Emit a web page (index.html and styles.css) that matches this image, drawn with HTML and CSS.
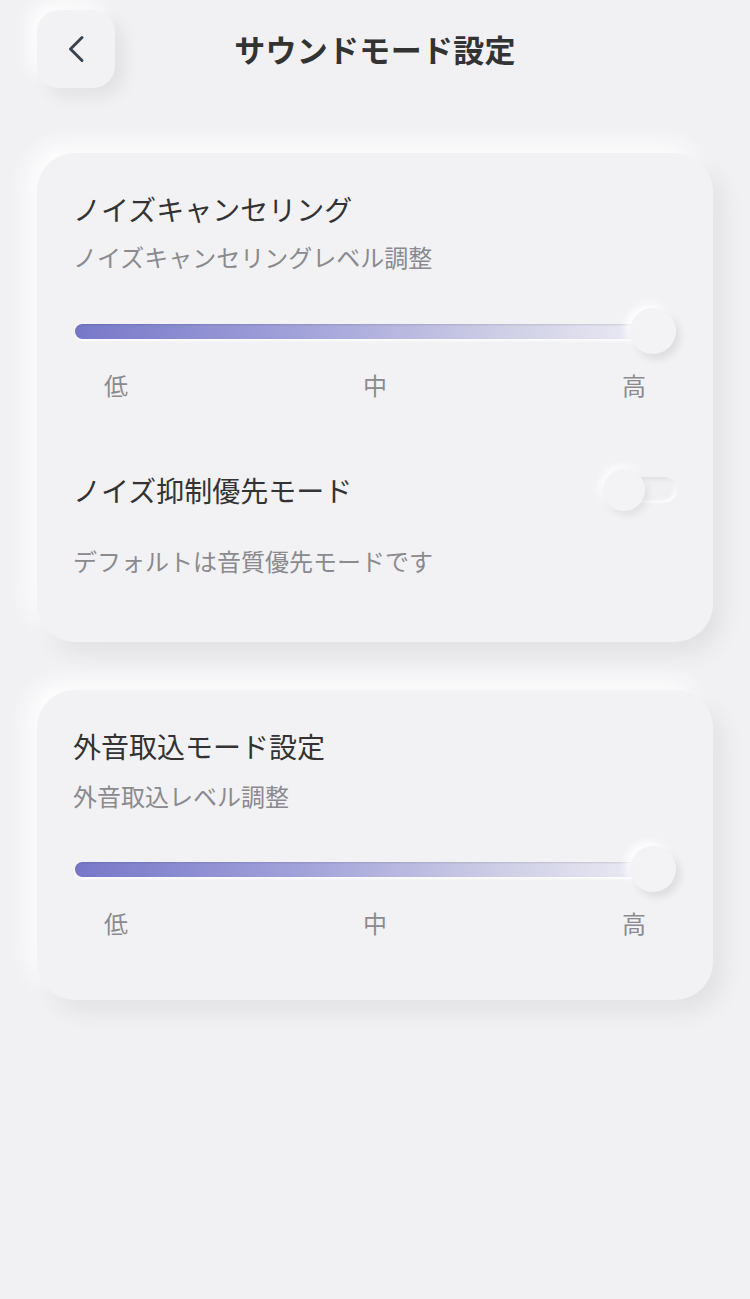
FILE: index.html
```html
<!DOCTYPE html>
<html lang="ja">
<head>
<meta charset="utf-8">
<title>サウンドモード設定</title>
<link rel="stylesheet" href="styles.css">
</head>
<body>
<div class="page">
  <header class="header">
    <button class="back" aria-label="戻る">
      <svg width="30" height="30" viewBox="0 0 30 30"><path d="M21 3.5 L9.5 15 L21 26.5" fill="none" stroke="#3b4350" stroke-width="3" stroke-linecap="round" stroke-linejoin="round"/></svg>
    </button>
    <h1 class="title">サウンドモード設定</h1>
    <div></div>
  </header>

  <section class="card card-nc">
    <div class="card-title">ノイズキャンセリング</div>
    <div class="card-sub">ノイズキャンセリングレベル調整</div>
    <div class="slider">
      <div class="track"></div>
      <div class="thumb"></div>
    </div>
    <div class="levels"><span>低</span><span>中</span><span>高</span></div>
    <div class="toggle-row">
      <div class="card-title">ノイズ抑制優先モード</div>
      <div class="toggle"><div class="toggle-track"></div><div class="toggle-knob"></div></div>
    </div>
    <div class="card-sub desc">デフォルトは音質優先モードです</div>
  </section>

  <section class="card card-amb">
    <div class="card-title">外音取込モード設定</div>
    <div class="card-sub">外音取込レベル調整</div>
    <div class="slider">
      <div class="track"></div>
      <div class="thumb"></div>
    </div>
    <div class="levels"><span>低</span><span>中</span><span>高</span></div>
  </section>
</div>
</body>
</html>
```
FILE: styles.css
```css
* { box-sizing: border-box; }
html, body {
  margin: 0;
  padding: 0;
  background: #f1f1f4;
  font-family: "Noto Sans CJK JP", "Noto Sans", sans-serif;
}
.page {
  width: 750px;
  min-height: 1299px;
  padding: 10px 37px 0;
  background: #f1f1f4;
}
.header {
  display: grid;
  grid-template-columns: 78px 1fr 78px;
  align-items: center;
  height: 78px;
}
.back {
  width: 78px;
  height: 78px;
  border: none;
  border-radius: 22px;
  background: #f2f2f5;
  box-shadow: 8px 8px 18px rgba(0,0,0,0.07), -8px -8px 18px rgba(255,255,255,0.95);
  display: flex;
  align-items: center;
  justify-content: center;
  padding: 0;
}
.title {
  margin: 0;
  text-align: center;
  font-size: 31px;
  font-weight: 700;
  color: #333;
  line-height: 40px;
  letter-spacing: 0.3px;
}
.card {
  background: #f2f2f5;
  border-radius: 38px;
  padding: 36px 36px 0;
  box-shadow: 10px 12px 24px rgba(0,0,0,0.065), -10px -10px 22px rgba(255,255,255,0.9);
}
.card-nc { margin-top: 65px; padding-bottom: 64px; }
.card-amb { margin-top: 48px; padding-bottom: 60px; }
.card-title {
  font-size: 28px;
  line-height: 40px;
  color: #333;
}
.card-sub {
  margin-top: 11px;
  font-size: 24px;
  line-height: 34px;
  color: #8a8a8f;
}
.card-amb .card-sub { margin-top: 13px; }
.slider {
  position: relative;
  height: 46px;
  margin-top: 34px;
  display: flex;
  align-items: center;
}
.card-amb .slider { margin-top: 33px; }
.track {
  width: 575px;
  margin-left: 2px;
  height: 15px;
  border-radius: 8px;
  background: linear-gradient(90deg, #7777c9 0%, #a3a3da 40%, #cfcfe6 75%, #ececf4 100%);
  box-shadow: inset 0 1px 2px rgba(0,0,0,0.12), 0 2px 3px rgba(255,255,255,0.8);
}
.thumb {
  position: absolute;
  right: 1px;
  top: 0;
  width: 46px;
  height: 46px;
  border-radius: 50%;
  background: #f3f3f6;
  box-shadow: 4px 5px 9px rgba(0,0,0,0.09), -4px -4px 9px rgba(255,255,255,0.95);
}
.levels {
  display: flex;
  justify-content: space-between;
  padding: 0 31px;
  margin-top: 14px;
  font-size: 24px;
  line-height: 34px;
  color: #8a8a8f;
}
.toggle-row {
  display: flex;
  justify-content: space-between;
  align-items: center;
  margin-top: 66px;
}
.toggle {
  position: relative;
  width: 74px;
  height: 44px;
}
.toggle-track {
  position: absolute;
  right: 0;
  top: 9px;
  width: 60px;
  height: 26px;
  border-radius: 13px;
  background: #f0f0f3;
  box-shadow: inset 2px 2px 4px rgba(0,0,0,0.08), inset -2px -2px 4px rgba(255,255,255,0.9);
}
.toggle-knob {
  position: absolute;
  left: 0;
  top: 1px;
  width: 42px;
  height: 42px;
  border-radius: 50%;
  background: #f3f3f6;
  box-shadow: 3px 4px 8px rgba(0,0,0,0.08), -3px -3px 8px rgba(255,255,255,0.95);
}
.desc { margin-top: 32px; }
```
